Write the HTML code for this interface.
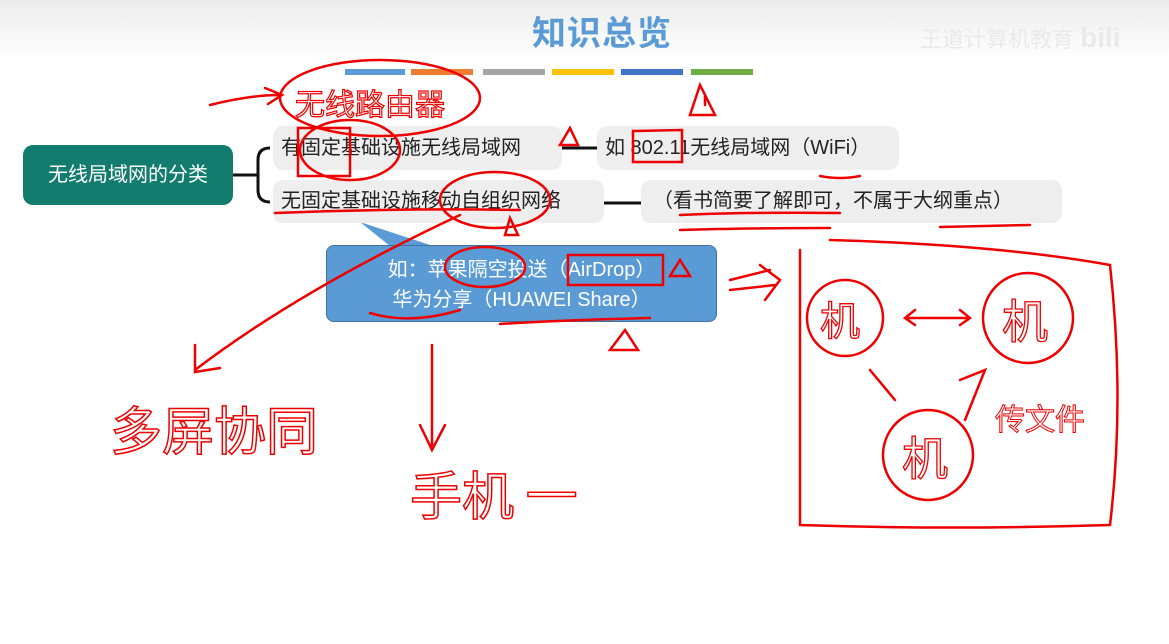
<!DOCTYPE html>
<html><head><meta charset="utf-8"><style>
*{margin:0;padding:0;box-sizing:border-box}
body{width:1169px;height:644px;overflow:hidden;background:#fff;position:relative;font-family:"Liberation Sans","Noto Sans CJK SC",sans-serif}
.top{position:absolute;left:0;top:0;width:1169px;height:60px;background:linear-gradient(#ececec,#fff)}
.title{position:absolute;left:0;width:1169px;top:6px;text-align:center;font-size:34px;font-weight:bold;color:#5b9bd5;letter-spacing:1px;padding-left:35px}
.bar{position:absolute;top:69px;height:6px}
.node{position:absolute;background:#eeeeee;border-radius:10px;font-size:20px;color:#222;line-height:44px;padding-left:8px;white-space:nowrap}
.green{position:absolute;left:23px;top:145px;width:210px;height:60px;background:#127c6e;border-radius:10px;color:#fff;font-size:20px;line-height:60px;text-align:center}
.call{position:absolute;left:326px;top:245px;width:391px;height:77px;background:#5b9bd5;border:1px solid #41719c;border-radius:8px;color:#fff;font-size:20px;text-align:center;line-height:30px;padding-top:9px}
svg{position:absolute;left:0;top:0}
</style></head><body>
<div class="top"></div>
<div class="title">知识总览</div>
<div style="position:absolute;left:920px;top:22px;font-size:22px;color:#eaeaea">王道计算机教育 <b style="font-size:28px">bili</b></div>
<div class="bar" style="left:345px;width:60px;background:#5b9bd5"></div>
<div class="bar" style="left:411px;width:62px;background:#ed7d31"></div>
<div class="bar" style="left:483px;width:62px;background:#a5a5a5"></div>
<div class="bar" style="left:552px;width:62px;background:#ffc000"></div>
<div class="bar" style="left:621px;width:62px;background:#4472c4"></div>
<div class="bar" style="left:691px;width:62px;background:#70ad47"></div>
<svg width="1169" height="644"><path d="M233 175H252M270 148Q258 148 258 160V190Q258 202 270 202M252 175H258M562 148H597M604 203H641" stroke="#111" stroke-width="3" fill="none"/>
<polygon points="360,222 430,245 395,250" fill="#5b9bd5"/></svg>
<div class="green">无线局域网的分类</div>
<div class="node" style="left:273px;top:126px;width:289px;height:44px">有固定基础设施无线局域网</div>
<div class="node" style="left:273px;top:180px;width:331px;height:43px;line-height:43px">无固定基础设施移动自组织网络</div>
<div class="node" style="left:597px;top:126px;width:302px;height:44px">如 802.11无线局域网（WiFi）</div>
<div class="node" style="left:641px;top:180px;width:421px;height:43px;line-height:43px;padding-left:12px">（看书简要了解即可，不属于大纲重点）</div>
<div class="call">如：苹果隔空投送（AirDrop）<br>华为分享（HUAWEI Share）</div>
<svg width="1169" height="644" fill="none" stroke="#e00" stroke-width="2.5" stroke-linecap="round">
<ellipse cx="380" cy="98" rx="100" ry="38"/>
<path d="M210 105Q250 95 280 95M265 88L282 95L268 104"/>
<text x="295" y="115" font-size="30" fill="none" stroke="#e00" stroke-width="1.2" font-family="Noto Sans CJK SC">无线路由器</text>
<path d="M700 85L690 115H715Z M705 95V105"/>
<rect x="298" y="128" width="52" height="48"/><ellipse cx="350" cy="150" rx="50" ry="30"/>
<path d="M560 145L570 128L578 145Z M633 131V162H682V130Z M820 176Q840 180 860 176"/>
<ellipse cx="495" cy="200" rx="55" ry="28"/>
<path d="M275 213Q400 208 520 210 M680 215Q740 212 840 213 M680 230Q740 228 830 228 M940 227Q990 226 1030 225 M510 218L518 235H505Z"/>
<ellipse cx="485" cy="267" rx="40" ry="20"/><rect x="568" y="255" width="95" height="30"/>
<path d="M670 276L680 260L690 276Z M500 324Q560 320 650 318 M370 313Q410 325 460 310 M610 350L625 330L638 350Z"/>
<path d="M460 215Q300 290 195 370M195 345L195 372L220 368"/>
<path d="M432 345V445M420 425L432 450L445 425"/>
<text x="110" y="450" font-size="52" fill="none" stroke="#e00" stroke-width="1.5" font-family="Noto Sans CJK SC">多屏协同</text>
<text x="410" y="515" font-size="52" fill="none" stroke="#e00" stroke-width="1.5" font-family="Noto Sans CJK SC">手机 一</text>
<path d="M730 280L770 270M730 290L775 285M760 265L780 280L765 300"/>
<path d="M800 250V525Q950 530 1110 525Q1125 400 1110 265Q1000 245 830 240"/>
<circle cx="845" cy="318" r="38"/><circle cx="1028" cy="318" r="45"/><circle cx="928" cy="455" r="45"/>
<path d="M905 318H970M915 310L905 318L915 325M960 310L970 318L960 325M870 370L895 400M960 380L985 370L965 420"/>
<text x="820" y="335" font-size="40" fill="none" stroke="#e00" stroke-width="1.3" font-family="Noto Sans CJK SC">机</text>
<text x="1002" y="338" font-size="46" fill="none" stroke="#e00" stroke-width="1.3" font-family="Noto Sans CJK SC">机</text>
<text x="902" y="475" font-size="46" fill="none" stroke="#e00" stroke-width="1.3" font-family="Noto Sans CJK SC">机</text>
<text x="995" y="430" font-size="30" fill="none" stroke="#e00" stroke-width="1" font-family="Noto Sans CJK SC">传文件</text>
</svg>
</body></html>
